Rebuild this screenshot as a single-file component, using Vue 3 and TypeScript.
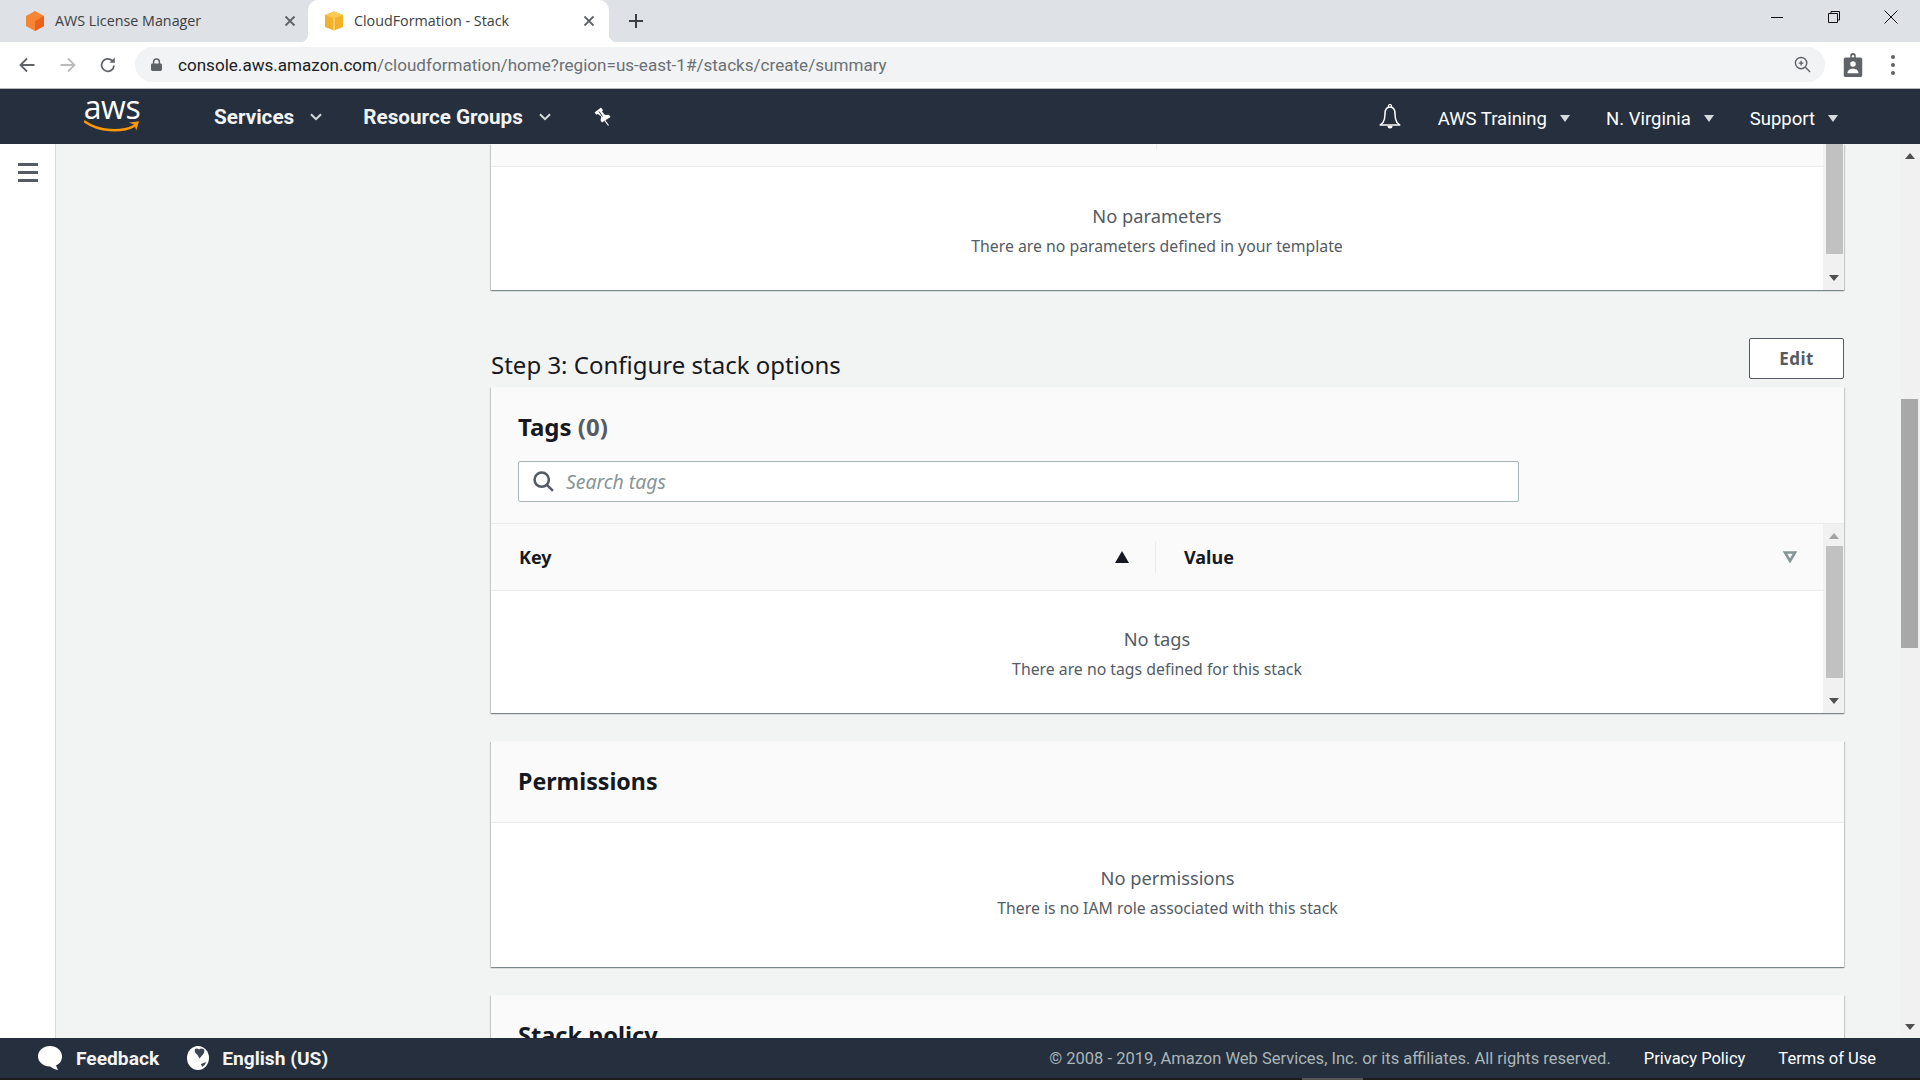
<template>
  <div class="screen">
    <!-- browser tabs -->
    <div class="tabstrip">
      <div class="tab">
        <svg class="favicon" viewBox="0 0 20 20">
          <path d="M10 0 19 5v10l-9 5-9-5V5z" fill="#f58534" />
          <path d="M10 10 19 5v10l-9 5z" fill="#e8621a" />
        </svg>
        <span class="tab-title">AWS License Manager</span>
        <svg class="tab-close" viewBox="0 0 12 12"><path d="M1.500 1.500l9 9M10.500 1.500l-9 9" /></svg>
      </div>
      <div class="tab active">
        <svg class="favicon" viewBox="0 0 20 20">
          <path d="M10 .5 19 4v12l-9 3.500L1 16V4z" fill="#f3b02a" />
          <path d="M10 .5 19 4l-9 3.500L1 4z" fill="#f9c954" />
          <path d="M10 7.500v12" fill="none" stroke="#fce3a8" stroke-width="1.200" />
        </svg>
        <span class="tab-title">CloudFormation - Stack</span>
        <svg class="tab-close" viewBox="0 0 12 12"><path d="M1.500 1.500l9 9M10.500 1.500l-9 9" /></svg>
      </div>
      <svg class="new-tab" viewBox="0 0 16 16"><path d="M8 1v14M1 8h14" /></svg>
      <div class="win-controls">
        <svg viewBox="0 0 14 14" class="win-icon"><path d="M1 7.500h12" /></svg>
        <svg viewBox="0 0 14 14" class="win-icon"><path d="M1.500 3.500h9v9h-9zM4 3.500V1.500h8.500v8.500h-2" /></svg>
        <svg viewBox="0 0 14 14" class="win-icon"><path d="M.5.5l13 13M13.500.5l-13 13" /></svg>
      </div>
    </div>

    <!-- address bar -->
    <div class="toolbar">
      <svg class="tool-icon back" viewBox="0 0 18 18"><path d="M16.500 9H2.500M9 2.500 2.500 9 9 15.500" /></svg>
      <svg class="tool-icon forward" viewBox="0 0 18 18"><path d="M1.500 9h14M9 2.500 15.500 9 9 15.500" /></svg>
      <svg class="tool-icon reload" viewBox="0 0 18 18">
        <path d="M15 9.500A6.200 6.200 0 1 1 13.200 4.700" />
        <path class="solid" d="M10.500 6.800h5.300V1.500z" />
      </svg>
      <div class="address">
        <svg class="lock" viewBox="0 0 12 14">
          <path d="M2 6V4.200a4 4 0 0 1 8 0V6h.5c.8 0 1.500.7 1.500 1.500V12.500c0 .8-.7 1.500-1.500 1.500h-9C.7 14 0 13.300 0 12.500V7.500C0 6.700.7 6 1.500 6zm1.600 0h4.800V4.200a2.400 2.400 0 0 0-4.800 0z" fill="#5f6368" />
        </svg>
        <span class="url"><span class="host">console.aws.amazon.com</span>/cloudformation/home?region=us-east-1#/stacks/create/summary</span>
        <svg class="zoom-icon" viewBox="0 0 18 18">
          <circle cx="7.500" cy="7.500" r="6" />
          <path d="M12 12l5 5M7.500 5v5M5 7.500h5" />
        </svg>
      </div>
      <svg class="badge" viewBox="0 0 20 26">
        <path d="M2 5h5V3a3 3 0 0 1 6 0v2h5c1.100 0 2 .9 2 2v17c0 1.100-.9 2-2 2H2c-1.100 0-2-.9-2-2V7c0-1.100.9-2 2-2z" fill="#5f6368" />
        <circle cx="10" cy="3.500" r="1.300" fill="#fff" />
        <circle cx="10" cy="12" r="3" fill="#fff" />
        <path d="M4 22c0-3.500 3-5 6-5s6 1.500 6 5z" fill="#fff" />
      </svg>
      <div class="kebab"><i></i><i></i><i></i></div>
    </div>

    <!-- aws console nav -->
    <nav class="topnav">
      <div class="aws-logo">
        <span class="aws-word">aws</span>
        <svg class="aws-smile" viewBox="0 0 58 13">
          <path d="M1 1.500C16 12 38 13 53 5.500" fill="none" stroke="#f90" stroke-width="2.600" stroke-linecap="round" />
          <path d="M46 2.500 57 1l-3 10c-.5-2.500-1-5-2.500-6.500C50 3.500 48 3 46 2.500z" fill="#f90" />
        </svg>
      </div>
      <a class="nav-main services">Services</a>
      <svg class="chev" viewBox="0 0 12 8"><path d="M1 1.200 6 6.200l5-5" /></svg>
      <a class="nav-main groups">Resource Groups</a>
      <svg class="chev" viewBox="0 0 12 8"><path d="M1 1.200 6 6.200l5-5" /></svg>
      <svg class="pin" viewBox="0 0 17 19">
        <path d="M.5 5.500 7 .5l2 2.800-1 1.200 3 3.500 4-.3 1.500 2.200-8.500 5.600-1.500-2.200.8-3.700-3.400-2.500-1.400.6z" fill="#fff" />
        <path d="M10.500 13l4 5.500" stroke="#fff" stroke-width="1.200" fill="none" />
        <path d="M5 4.500l3.500 5" stroke="#252f3e" stroke-width="1" fill="none" />
      </svg>
      <div class="nav-right">
        <svg class="bell" viewBox="0 0 22 25">
          <path d="M11 3C7 3 6 6 6 10c0 4-.5 6-2 8.500L1.200 21h19.600L18 18.500c-1.500-2.500-2-4.500-2-8.500 0-4-1-7-5-7z" fill="none" stroke="#fff" stroke-width="1.500" stroke-linejoin="round" />
          <path d="M9.500 3V2a1.500 1.500 0 0 1 3 0v1" fill="none" stroke="#fff" stroke-width="1.200" />
          <path d="M8.500 22h5a2.500 2.500 0 0 1-5 0z" fill="#fff" />
        </svg>
        <div v-for="item in navRight" :key="item" class="nav-item">
          <span>{{ item }}</span>
          <svg class="caret" viewBox="0 0 10 7"><path d="M0 0h10L5 7z" /></svg>
        </div>
      </div>
    </nav>

    <div class="main">
      <aside class="sidebar">
        <div class="hamburger"><i></i><i></i><i></i></div>
      </aside>

      <div class="content">
        <section class="panel first-panel">
          <div class="panel-row">
            <div class="grow">
              <div class="cut-head"><i></i></div>
              <div class="empty">
                <div class="empty-title">No parameters</div>
                <div class="empty-text">There are no parameters defined in your template</div>
              </div>
            </div>
            <div class="inner-scroll top-cut">
              <div class="thumb thumb-a"></div>
              <svg class="arrow dn" viewBox="0 0 10 6"><path d="M0 0h10L5 6z" /></svg>
            </div>
          </div>
        </section>

        <div class="section-head">
          <h2>Step 3: Configure stack options</h2>
          <button class="edit-btn">Edit</button>
        </div>
        <section class="panel">
          <div class="panel-head tags-head">
            <h3 class="tags-title">Tags <span class="count">(0)</span></h3>
            <div class="search">
              <svg viewBox="0 0 20 20"><circle cx="8.300" cy="8.300" r="6.800" /><path d="M13 13l6 6" /></svg>
              <span>Search tags</span>
            </div>
          </div>
          <div class="panel-row">
            <div class="grow">
              <div class="table-head">
                <div class="col key-col">
                  <span>Key</span>
                  <svg class="sort-up" viewBox="0 0 14 12"><path d="M7 0l7 12H0z" /></svg>
                </div>
                <div class="col value-col">
                  <span>Value</span>
                  <svg class="sort-dn" viewBox="0 0 14 12"><path d="M2 1.500h10L7 10z" /></svg>
                </div>
              </div>
              <div class="empty">
                <div class="empty-title">No tags</div>
                <div class="empty-text">There are no tags defined for this stack</div>
              </div>
            </div>
            <div class="inner-scroll">
              <svg class="arrow up off" viewBox="0 0 10 6"><path d="M0 6h10L5 0z" /></svg>
              <div class="thumb thumb-b"></div>
              <svg class="arrow dn" viewBox="0 0 10 6"><path d="M0 0h10L5 6z" /></svg>
            </div>
          </div>
        </section>

        <section class="panel perm-panel">
          <div class="panel-head"><h3 class="perm-title">Permissions</h3></div>
          <div class="empty perm-empty">
            <div class="empty-title">No permissions</div>
            <div class="empty-text">There is no IAM role associated with this stack</div>
          </div>
        </section>

        <section class="panel policy-panel">
          <div class="panel-head"><h3>Stack policy</h3></div>
        </section>
      </div>

      <div class="page-scroll">
        <svg class="arrow up" viewBox="0 0 10 6"><path d="M0 6h10L5 0z" /></svg>
        <div class="page-thumb"></div>
        <svg class="arrow dn" viewBox="0 0 10 6"><path d="M0 0h10L5 6z" /></svg>
      </div>
    </div>

    <footer class="footer">
      <svg class="bubble" viewBox="0 0 24 24">
        <path d="M12 0c6.600 0 12 4.500 12 10.500 0 4.500-2.500 7.500-6 9l2 4.500c-3-.5-6-2-8-3.500C5.400 20.500 0 16 0 10.500 0 4.500 5.400 0 12 0z" fill="#fff" />
      </svg>
      <span class="foot-strong feedback">Feedback</span>
      <svg class="globe" viewBox="0 0 22 24">
        <ellipse cx="11" cy="12" rx="11" ry="12" fill="#fff" />
        <path d="M8 3c1.500-1 3-.5 4 .5 1-1.200 3-1.500 4.500-.5 1.500 1.500 1 4-1 6l-3 3.500-2-3.500C8.500 7.500 7 5 8 3zM14 18l5-2c-.5 2-2 4-4 5z" fill="#3c4554" />
      </svg>
      <span class="foot-strong">English (US)</span>
      <div class="foot-right">
        <span class="copy">© 2008 - 2019, Amazon Web Services, Inc. or its affiliates. All rights reserved.</span>
        <a>Privacy Policy</a>
        <a>Terms of Use</a>
      </div>
    </footer>
    <div class="taskbar-edge"><i></i></div>
  </div>
</template>

<script setup lang="ts">
const navRight: string[] = ['AWS Training', 'N. Virginia', 'Support']
</script>

<style>
html,
body {
  margin: 0;
  overflow: hidden;
}
</style>

<style scoped>
.screen {
  width: 1920px;
  height: 1080px;
  display: flex;
  flex-direction: column;
  overflow: hidden;
  font-family: "Noto Sans", sans-serif;
  background: #f2f3f3;
  color: #16191f;
}

/* browser tabs */
.tabstrip {
  height: 42px;
  flex: none;
  display: flex;
  align-items: center;
  background: #dee1e6;
}
.tab {
  width: 308px;
  height: 42px;
  box-sizing: border-box;
  display: flex;
  align-items: center;
  padding: 0 0 1px 25px;
  position: relative;
  font-family: "Open Sans", sans-serif;
  font-size: 14.300px;
  color: #3c4043;
}
.tab.active {
  width: 301px;
  padding-left: 16px;
  background: #fff;
  border-radius: 10px 10px 0 0;
}
.tab.active::before,
.tab.active::after {
  content: "";
  position: absolute;
  bottom: 0;
  width: 8px;
  height: 8px;
}
.tab.active::before {
  left: -8px;
  background: radial-gradient(circle at 0 0, transparent 8px, #fff 8.500px);
}
.tab.active::after {
  right: -8px;
  background: radial-gradient(circle at 100% 0, transparent 8px, #fff 8.500px);
}
.favicon {
  width: 20px;
  height: 20px;
  flex: none;
}
.tab-title {
  margin-left: 10px;
  white-space: nowrap;
}
.tab-close {
  position: absolute;
  right: 12px;
  top: 15px;
  width: 12px;
  height: 12px;
  stroke: #5f6368;
  stroke-width: 1.800;
  fill: none;
}
.tab.active .tab-close {
  right: 14px;
}
.new-tab {
  width: 16px;
  height: 16px;
  margin-left: 19px;
  stroke: #3c4043;
  stroke-width: 2;
  fill: none;
}
.win-controls {
  margin-left: auto;
  margin-right: 22px;
  margin-top: -8px;
  display: flex;
  gap: 43px;
}
.win-icon {
  width: 14px;
  height: 14px;
  stroke: #111;
  stroke-width: 1;
  fill: none;
}

/* toolbar */
.toolbar {
  height: 47px;
  flex: none;
  box-sizing: border-box;
  display: flex;
  align-items: center;
  background: #fff;
  border-bottom: 1px solid #b7b9bb;
  padding: 0 0 1px 18px;
}
.tool-icon {
  width: 18px;
  height: 18px;
  flex: none;
  fill: none;
  stroke-width: 1.800;
  stroke: #5f6368;
}
.tool-icon.forward {
  margin-left: 23px;
  stroke: #babcbe;
}
.tool-icon.reload {
  margin-left: 22px;
}
.tool-icon .solid {
  fill: #5f6368;
  stroke: none;
}
.address {
  margin-left: 18px;
  width: 1690px;
  height: 35px;
  flex: none;
  box-sizing: border-box;
  display: flex;
  align-items: center;
  padding: 0 14px 0 16px;
  background: #f1f3f4;
  border-radius: 18px;
  font-family: Roboto, sans-serif;
  font-size: 17.080px;
  color: #6b7074;
}
.lock {
  width: 11px;
  height: 13px;
  flex: none;
}
.url {
  margin-left: 16px;
  white-space: nowrap;
}
.host {
  color: #202124;
}
.zoom-icon {
  width: 17px;
  height: 17px;
  margin-left: auto;
  fill: none;
  stroke: #5f6368;
  stroke-width: 1.500;
}
.badge {
  width: 20px;
  height: 24px;
  flex: none;
  margin-left: 18px;
}
.kebab {
  margin-left: 28px;
  display: flex;
  flex-direction: column;
  gap: 4px;
}
.kebab i {
  width: 4px;
  height: 4px;
  border-radius: 50%;
  background: #5f6368;
}

/* console nav */
.topnav {
  height: 55px;
  flex: none;
  display: flex;
  align-items: center;
  background: #252f3e;
  color: #fff;
  font-family: Roboto, sans-serif;
}
.aws-logo {
  width: 58px;
  margin-left: 83px;
  display: flex;
  flex-direction: column;
  align-items: center;
}
.aws-word {
  font-family: "Open Sans", sans-serif;
  font-size: 32px;
  line-height: 24px;
  height: 24px;
  letter-spacing: -0.500px;
  margin-top: -6px;
}
.aws-smile {
  width: 56px;
  height: 13px;
  margin-top: 1px;
}
.nav-main {
  font-size: 20.700px;
  font-weight: 700;
  white-space: nowrap;
  color: #f2f3f3;
}
.services {
  margin-left: 73px;
}
.groups {
  margin-left: 41px;
}
.chev {
  width: 12px;
  height: 8px;
  margin-left: 16px;
  fill: none;
  stroke: #d5dbdb;
  stroke-width: 2;
}
.pin {
  width: 17px;
  height: 19px;
  margin-left: 43px;
}
.nav-right {
  margin-left: auto;
  margin-right: 82px;
  margin-top: 4px;
  display: flex;
  align-items: center;
}
.bell {
  width: 22px;
  height: 25px;
  margin-right: 37px;
  margin-top: -4px;
}
.nav-item {
  display: flex;
  align-items: center;
  font-size: 18.500px;
  margin-right: 36px;
  white-space: nowrap;
}
.nav-item:last-child {
  margin-right: 0;
}
.caret {
  width: 10px;
  height: 7px;
  margin-left: 13px;
  fill: #d5dbdb;
}

/* page */
.main {
  height: 894px;
  flex: none;
  display: flex;
  overflow: hidden;
}
.sidebar {
  width: 56px;
  flex: none;
  box-sizing: border-box;
  background: #fff;
  border-right: 1px solid #d5dbdb;
  padding: 19px 0 0 18px;
}
.hamburger {
  display: flex;
  flex-direction: column;
  gap: 5px;
}
.hamburger i {
  width: 20px;
  height: 3px;
  background: #545b64;
}
.content {
  flex: 1;
  min-width: 0;
  padding: 0 56px 0 435px;
}
.panel {
  background: #fff;
  box-shadow: 0 1px 1px 0 rgba(0, 28, 36, 0.3), 1px 1px 1px 0 rgba(0, 28, 36, 0.15), -1px 1px 1px 0 rgba(0, 28, 36, 0.15);
  border-top: 1px solid #f6f6f6;
  box-sizing: border-box;
}
.first-panel {
  height: 146px;
  border-top: 0;
}
.first-panel .empty {
  padding-top: 34px;
}
.panel-row {
  display: flex;
  height: 100%;
}
.grow {
  flex: 1;
  min-width: 0;
}
.cut-head {
  height: 23px;
  box-sizing: border-box;
  background: #fafafa;
  border-bottom: 1px solid #eaeded;
  padding-left: 665px;
}
.cut-head i {
  display: block;
  width: 1px;
  height: 6px;
  background: #eaeded;
}
.empty {
  padding-top: 33px;
  text-align: center;
}
.empty-title {
  font-size: 18.300px;
  line-height: 30px;
  color: #545b64;
}
.empty-text {
  font-size: 15.800px;
  line-height: 30px;
  color: #545b64;
}
.inner-scroll {
  width: 21px;
  flex: none;
  box-sizing: border-box;
  background: #f1f1f1;
  display: flex;
  flex-direction: column;
  align-items: center;
  padding: 9px 0 9px;
}
.inner-scroll.top-cut {
  padding-top: 0;
}
.thumb {
  width: 17px;
  margin-left: 1px;
  background: #c1c1c1;
}
.thumb-a {
  height: 110px;
}
.thumb-b {
  height: 132px;
  margin-top: 7px;
}
.arrow {
  width: 10px;
  height: 6px;
  flex: none;
  fill: #505050;
}
.arrow.off {
  fill: #a3a3a3;
}
.inner-scroll .dn {
  margin-top: auto;
}
.section-head {
  margin: 48px 0 8px;
  display: flex;
  align-items: flex-end;
  justify-content: space-between;
}
h2 {
  margin: 0 0 -1px;
  font-size: 24px;
  font-weight: 400;
  line-height: 30px;
  color: #16191f;
}
.edit-btn {
  width: 95px;
  height: 41px;
  box-sizing: border-box;
  background: #fff;
  border: 1px solid #545b64;
  border-radius: 2px;
  padding: 0;
  font-family: "Noto Sans", sans-serif;
  font-size: 17px;
  font-weight: 700;
  letter-spacing: 0.500px;
  color: #545b64;
}
.panel-head {
  height: 81px;
  box-sizing: border-box;
  background: #fafafa;
  border-bottom: 1px solid #eaeded;
  padding: 24px 28px 0 27px;
}
h3 {
  margin: 0;
  font-size: 23.600px;
  font-weight: 700;
  line-height: 30px;
  color: #16191f;
}
.tags-title {
  font-size: 24px;
}
.perm-title {
  font-size: 23.200px;
}
.count {
  color: #545b64;
}
.tags-head {
  height: 136px;
}
.search {
  width: 1001px;
  height: 41px;
  margin-top: 19px;
  box-sizing: border-box;
  display: flex;
  align-items: center;
  background: #fff;
  border: 1px solid #aab7b8;
  border-radius: 2px;
  padding-left: 14px;
  font-size: 19.400px;
  font-style: italic;
  color: #879596;
}
.search svg {
  width: 21px;
  height: 21px;
  fill: none;
  stroke: #545b64;
  stroke-width: 2.400;
  margin-right: 12px;
}
.panel-row:nth-child(2) {
  height: 189px;
}
.table-head {
  height: 67px;
  box-sizing: border-box;
  display: flex;
  align-items: center;
  background: #fafafa;
  border-bottom: 1px solid #eaeded;
  font-size: 18px;
  font-weight: 700;
}
.col {
  height: 32px;
  box-sizing: border-box;
  display: flex;
  align-items: center;
  justify-content: space-between;
}
.key-col {
  width: 665px;
  padding: 0 26px 0 28px;
  border-right: 1px solid #eaeded;
}
.value-col {
  flex: 1;
  padding: 0 26px 0 28px;
}
.sort-up {
  width: 14px;
  height: 12px;
  fill: #16191f;
}
.sort-dn {
  width: 14px;
  height: 12px;
  fill: none;
  stroke: #879596;
  stroke-width: 2.600;
}
.perm-panel {
  height: 226px;
  margin-top: 28px;
}
.perm-empty {
  padding-top: 40px;
}
.policy-panel {
  margin-top: 28px;
}

/* page scrollbar */
.page-scroll {
  width: 20px;
  flex: none;
  box-sizing: border-box;
  background: #f1f1f1;
  display: flex;
  flex-direction: column;
  align-items: center;
  padding: 9px 0 8px;
}
.page-thumb {
  width: 17px;
  height: 249px;
  margin: 240px 0 0 -1px;
  background: #a8a8a8;
}
.page-scroll .dn {
  margin-top: auto;
}

/* footer */
.footer {
  height: 40px;
  flex: none;
  display: flex;
  align-items: center;
  background: #252f3e;
  color: #fff;
  font-family: Roboto, sans-serif;
  padding-left: 38px;
}
.bubble {
  width: 24px;
  height: 24px;
}
.foot-strong {
  margin-left: 14px;
  font-size: 19.200px;
  font-weight: 700;
  color: #f2f3f3;
}
.feedback {
  margin-right: 28px;
}
.globe {
  width: 22px;
  height: 24px;
}
.globe + .foot-strong {
  margin-left: 13px;
}
.foot-right {
  margin-left: auto;
  margin-right: 44px;
  display: flex;
  align-items: center;
  font-size: 16.500px;
  gap: 33px;
}
.copy {
  color: #aab7b8;
}
.taskbar-edge {
  height: 2px;
  flex: none;
  background: #1c1c1c;
  padding-left: 1302px;
}
.taskbar-edge i {
  display: block;
  width: 61px;
  height: 2px;
  background: #555;
}
</style>
